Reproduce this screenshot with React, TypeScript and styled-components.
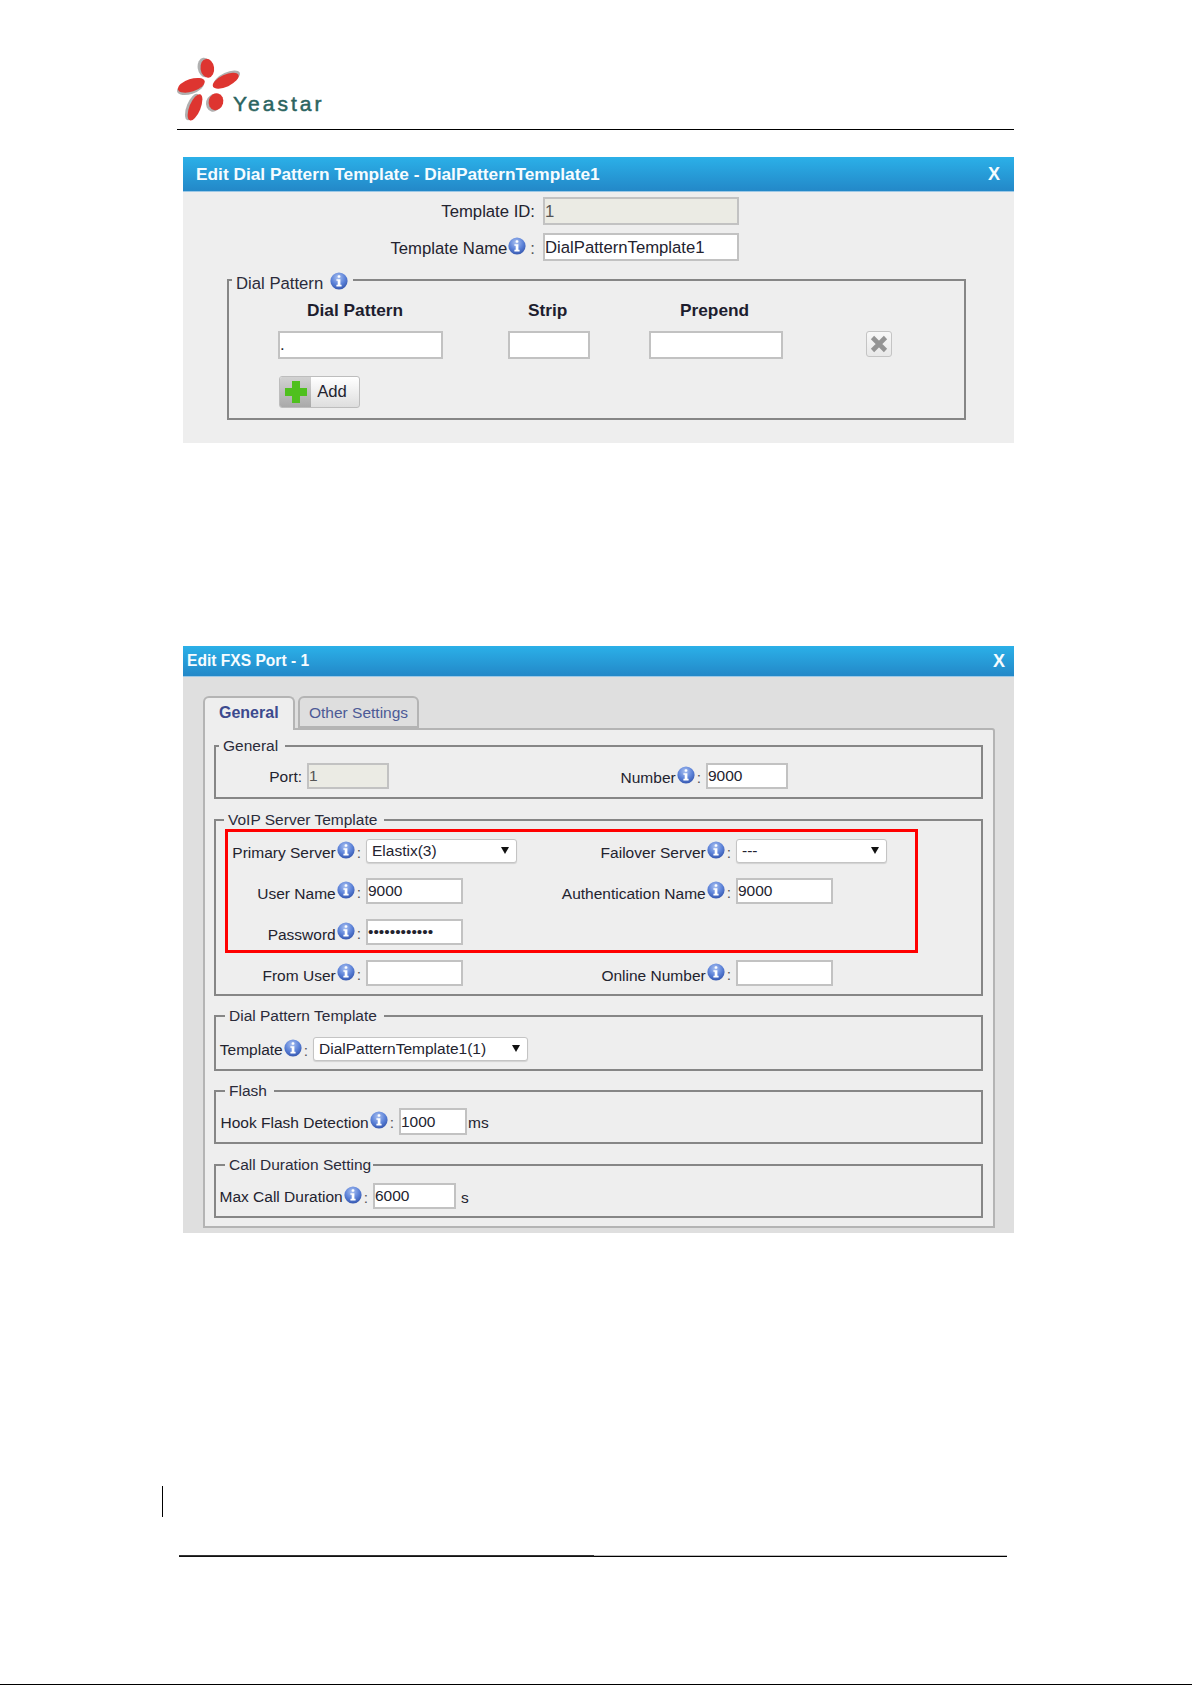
import { useId } from "react"
import styled, { createGlobalStyle } from "styled-components"

const GlobalStyle = createGlobalStyle`
html, body {
  margin: 0;
  background: #fff;
}
body {
  font-family: "Liberation Sans", Arial, sans-serif;
  font-size: 15.5px;
  color: #23232f;
}
`

const Page = styled.div`
width: 1192px;
height: 1685px;
display: flex;
flex-direction: column;
overflow: hidden;
`

const Header = styled.header`
margin: 57px 178px 0 177px;
height: 72px;
box-sizing: content-box;
border-bottom: 1px solid #000;
`

const Panel = styled.section<{ $top: number; $height: number; $bg: string; $font: number }>`
margin: ${(p) => p.$top}px 178px 0 183px;
height: ${(p) => p.$height}px;
background: ${(p) => p.$bg};
font-size: ${(p) => p.$font}px;
box-sizing: border-box;
`

const TitleBar = styled.div<{ $height: number; $pad: number; $padEnd: number; $font: number }>`
height: ${(p) => p.$height}px;
box-sizing: border-box;
padding: 0 ${(p) => p.$padEnd}px 0 ${(p) => p.$pad}px;
display: flex;
align-items: center;
justify-content: space-between;
background: linear-gradient(#2bb0e8, #2388c8);
border-bottom: 1px solid #9cc8e6;
color: #f6fcff;
font-weight: bold;
font-size: ${(p) => p.$font}px;
`

const TitleClose = styled.span`
font-size: 18px;
`

const TopRows = styled.div`
display: flex;
flex-direction: column;
gap: 8px;
padding-top: 5px;
`

const TopRow = styled.div`
display: flex;
height: 28px;
`

const Label = styled.div<{ $w: number; $pr?: number }>`
width: ${(p) => p.$w}px;
flex: none;
box-sizing: border-box;
padding-right: ${(p) => p.$pr ?? 5}px;
display: flex;
justify-content: flex-end;
align-items: center;
white-space: nowrap;
`

const LabelText = styled.span<{ $drop?: number }>`
margin-top: ${(p) => p.$drop ?? 3}px;
`

const Colon = styled.span<{ $ml?: number }>`
margin: 3px 0 0 ${(p) => p.$ml ?? 1}px;
color: #555;
`

const Info = styled.svg`
width: 18px;
height: 18px;
flex: none;
margin: -3px 1px 0 1px;
`

const Input = styled.input<{ $w: number; $h?: number }>`
width: ${(p) => p.$w}px;
height: ${(p) => p.$h ?? 26}px;
flex: none;
box-sizing: border-box;
border: 2px solid #c2c2c2;
padding: 0;
margin: 0;
background: #fff;
font: inherit;
color: #23232f;
outline: none;
&:disabled {
  background: #ebebe4;
  color: #555;
}
`

const TallInput = styled(Input)`
padding-top: 2px;
`

const Fieldset = styled.fieldset<{ $ml?: number; $mr?: number; $gap?: number }>`
margin: ${(p) => p.$gap ?? 11}px ${(p) => p.$mr ?? 0}px 0 ${(p) => p.$ml ?? 0}px;
padding: 0;
min-width: 0;
border: 2px solid #868686;
`

const Legend = styled.legend<{ $x: number; $pr?: number }>`
margin-left: ${(p) => p.$x - 4}px;
padding: 0 ${(p) => p.$pr ?? 7}px 0 4px;
height: 20px;
line-height: 20px;
display: flex;
align-items: center;
color: #2b2b3a;
`

const LegendText = styled.span`
margin-top: 8px;
`

const LegendInfo = styled(Info)`
margin: 2px 0 0 7px;
`

const PatternGrid = styled.div`
display: grid;
grid-template-columns: 230px 141px 217px 26px;
row-gap: 11px;
padding: 10px 0 0 49px;
`

const HeaderCell = styled.div<{ $indent: number }>`
padding-left: ${(p) => p.$indent}px;
height: 20px;
line-height: 20px;
font-size: 17.3px;
font-weight: bold;
color: #1d1d2e;
white-space: nowrap;
`

const AddButton = styled.button`
display: flex;
align-items: stretch;
width: 81px;
height: 32px;
margin: 17px 0 10px 50px;
padding: 0;
border: 1px solid #bdbdbd;
border-radius: 3px;
background: linear-gradient(#fff, #dedede);
font: inherit;
color: #23232f;
overflow: hidden;
`

const AddIcon = styled.span`
width: 31px;
display: flex;
align-items: center;
justify-content: center;
background: linear-gradient(#d2d2d2, #a9a9a9);
`

const AddLabel = styled.span`
flex: 1;
line-height: 30px;
text-align: center;
padding-right: 6px;
`

const DeleteButton = styled.button`
width: 26px;
height: 26px;
padding: 0;
border: 1px solid #c4c4c4;
border-radius: 3px;
background: linear-gradient(#f8f8f8, #e8e8e8);
display: flex;
align-items: center;
justify-content: center;
`

const TabArea = styled.div`
padding: 19px 19px 0 20px;
`

const TabBar = styled.div`
display: flex;
gap: 3px;
height: 32px;
`

const Tab = styled.div<{ $active?: boolean }>`
height: ${(p) => (p.$active ? 34 : 32)}px;
width: ${(p) => (p.$active ? 92 : 121)}px;
box-sizing: border-box;
position: relative;
z-index: 1;
border: 2px solid #b4b4b4;
border-bottom: ${(p) => (p.$active ? "none" : "2px solid #b4b4b4")};
border-radius: 6px 6px 0 0;
background: ${(p) => (p.$active ? "#eee" : "#dedede")};
color: ${(p) => (p.$active ? "#3c4a8e" : "#4c5a96")};
font-size: ${(p) => (p.$active ? 16 : 15.5)}px;
font-weight: ${(p) => (p.$active ? "bold" : "normal")};
padding-left: ${(p) => (p.$active ? 14 : 9)}px;
line-height: 29px;
white-space: nowrap;
`

const TabBody = styled.div`
height: 500px;
box-sizing: border-box;
border: 2px solid #b4b4b4;
border-radius: 0 3px 0 0;
background: #eee;
padding: 6px 10px 0 9px;
`

const FieldGrid = styled.div<{ $cols: string; $pt: number; $pb: number }>`
position: relative;
display: grid;
grid-template-columns: ${(p) => p.$cols};
align-items: center;
row-gap: 15px;
padding: 0;
margin: ${(p) => p.$pt}px 0 ${(p) => p.$pb}px;
`

const FieldCell = styled.div`
display: flex;
align-items: center;
`

const Unit = styled.span<{ $ml: number }>`
margin: 3px 0 0 ${(p) => p.$ml}px;
`

const RedMark = styled.div`
position: absolute;
left: 9px;
top: -10px;
width: 693px;
height: 124px;
box-sizing: border-box;
border: 3px solid #ff0000;
pointer-events: none;
`

const SelectBox = styled.div<{ $w: number; $h?: number }>`
position: relative;
width: ${(p) => p.$w}px;
height: ${(p) => p.$h ?? 24}px;
flex: none;
&::after {
  content: "";
  position: absolute;
  right: 8px;
  top: 8px;
  border-left: 4px solid transparent;
  border-right: 4px solid transparent;
  border-top: 7px solid #111;
}
`

const Select = styled.select`
appearance: none;
width: 100%;
height: 100%;
box-sizing: border-box;
border: 1px solid #c4c4c4;
border-radius: 3px;
background: #fff;
padding: 0 0 2px 5px;
margin: 0;
font: inherit;
color: #23232f;
outline: none;
box-shadow: 0 1px 1px rgba(0, 0, 0, 0.12);
`

const ChangeBar = styled.div`
margin: 253px 0 0 162px;
width: 1px;
height: 31px;
background: #000;
`

const FooterRule = styled.div`
margin: 38px 185px 0 179px;
height: 2px;
display: flex;
`

const RuleDark = styled.div`
width: 415px;
background: linear-gradient(#444, #000);
`

const RuleLight = styled.div`
flex: 1;
background: linear-gradient(#bbb 50%, #000 50%);
`

const PageEdge = styled.div`
margin-top: auto;
height: 1px;
background: #000;
`

function Logo() {
  return (
    <svg width="150" height="66" viewBox="0 0 150 66">
      <g fill="#b0b0b0">
        <ellipse cx="27.5" cy="10.5" rx="6.8" ry="9.8" transform="rotate(-8 27.5 10.5)" />
        <ellipse cx="50" cy="21.5" rx="14" ry="6" transform="rotate(-25 50 21.5)" />
        <ellipse cx="13.5" cy="30.5" rx="14" ry="6.5" transform="rotate(-18 13.5 30.5)" />
        <ellipse cx="15.5" cy="50" rx="14" ry="5.8" transform="rotate(-68 15.5 50)" />
        <ellipse cx="36.5" cy="46" rx="7.5" ry="8.7" transform="rotate(15 36.5 46)" />
      </g>
      <g fill="#de3530">
        <ellipse cx="30.3" cy="11.3" rx="6.8" ry="9.5" transform="rotate(-8 30.3 11.3)" />
        <ellipse cx="48.7" cy="23.7" rx="14" ry="6" transform="rotate(-25 48.7 23.7)" />
        <ellipse cx="14.3" cy="28.3" rx="14" ry="6.3" transform="rotate(-18 14.3 28.3)" />
        <ellipse cx="18" cy="50.3" rx="14" ry="5.6" transform="rotate(-68 18 50.3)" />
        <ellipse cx="39" cy="44.7" rx="7.3" ry="8.5" transform="rotate(15 39 44.7)" />
      </g>
      <text x="56" y="54" fontFamily="'Liberation Sans', Arial, sans-serif" fontSize="21" letterSpacing="3" stroke="#2b6460" strokeWidth="0.5" fill="#2b6460">
        Yeastar
      </text>
    </svg>
  )
}

function InfoIcon({ as: Comp = Info }: { as?: typeof Info }) {
  const id = useId()
  return (
    <Comp viewBox="0 0 18 18">
      <defs>
        <radialGradient id={id} cx="0.45" cy="0.3" r="0.75">
          <stop offset="0" stopColor="#a9c0f0" />
          <stop offset="0.55" stopColor="#5c82d8" />
          <stop offset="1" stopColor="#2f50a8" />
        </radialGradient>
      </defs>
      <circle cx="9" cy="9" r="8.6" fill={`url(#${id})`} />
      <rect x="7.6" y="3.2" width="2.8" height="2.6" rx="1" fill="#fff" />
      <path d="M6.4 7.2h4v5.6h1.2v1.6H6.4v-1.6h1.3V8.8H6.4z" fill="#fff" />
    </Comp>
  )
}

function Field({ w, text, pr, drop, colonGap }: { w: number; text: string; pr?: number; drop?: number; colonGap?: number }) {
  return (
    <Label $w={w} $pr={pr}>
      <LabelText $drop={drop}>{text}</LabelText>
      <InfoIcon />
      <Colon $ml={colonGap}>:</Colon>
    </Label>
  )
}

export default function App() {
  return (
    <Page>
      <GlobalStyle />
      <Header>
        <Logo />
      </Header>

      <Panel $top={27} $height={286} $bg="#eee" $font={16.7}>
        <TitleBar $height={35} $pad={13} $padEnd={14} $font={17.3}>
          <span>Edit Dial Pattern Template - DialPatternTemplate1</span>
          <TitleClose>X</TitleClose>
        </TitleBar>
        <TopRows>
          <TopRow>
            <Label $w={360} $pr={8}>
              <LabelText $drop={2}>Template ID:</LabelText>
            </Label>
            <TallInput $w={196} $h={28} disabled value="1" readOnly />
          </TopRow>
          <TopRow>
            <Field w={360} text="Template Name" pr={8} drop={4} colonGap={3} />
            <TallInput $w={196} $h={28} value="DialPatternTemplate1" readOnly />
          </TopRow>
        </TopRows>
        <Fieldset $ml={44} $mr={48} $gap={9}>
          <Legend $x={7} $pr={5}>
            <LegendText>Dial Pattern</LegendText>
            <InfoIcon as={LegendInfo} />
          </Legend>
          <PatternGrid>
            <HeaderCell $indent={29}>Dial Pattern</HeaderCell>
            <HeaderCell $indent={20}>Strip</HeaderCell>
            <HeaderCell $indent={31}>Prepend</HeaderCell>
            <div />
            <Input $w={165} $h={28} value="." readOnly />
            <Input $w={82} $h={28} value="" readOnly />
            <Input $w={134} $h={28} value="" readOnly />
            <DeleteButton aria-label="Delete">
              <svg width="22" height="22" viewBox="0 0 22 22">
                <path d="M4.5 4.5L17.5 17.5M17.5 4.5L4.5 17.5" stroke="#949494" strokeWidth="4.6" fill="none" />
              </svg>
            </DeleteButton>
          </PatternGrid>
          <AddButton>
            <AddIcon>
              <svg width="22" height="22" viewBox="0 0 22 22">
                <path d="M7 0h8v7h7v8h-7v7H7v-7H0V7h7z" fill="#4fc01e" />
              </svg>
            </AddIcon>
            <AddLabel>Add</AddLabel>
          </AddButton>
        </Fieldset>
      </Panel>

      <Panel $top={203} $height={587} $bg="#dfdfdf" $font={15.5}>
        <TitleBar $height={31} $pad={4} $padEnd={9} $font={15.6}>
          <span>Edit FXS Port - 1</span>
          <TitleClose>X</TitleClose>
        </TitleBar>
        <TabArea>
          <TabBar>
            <Tab $active>General</Tab>
            <Tab>Other Settings</Tab>
          </TabBar>
          <TabBody>
            <Fieldset $gap={0}>
              <Legend $x={7}>General</Legend>
              <FieldGrid $cols="91px 82px 317px 82px" $pt={7} $pb={8}>
                <Label $w={91}>
                  <LabelText $drop={2}>Port:</LabelText>
                </Label>
                <Input $w={82} disabled value="1" readOnly />
                <Field w={317} text="Number" drop={4} />
                <Input $w={82} value="9000" readOnly />
              </FieldGrid>
            </Fieldset>

            <Fieldset>
              <Legend $x={12}>VoIP Server Template</Legend>
              <FieldGrid $cols="150px 151px 219px 151px" $pt={9} $pb={8}>
                <Field w={150} text="Primary Server" drop={4} />
                <SelectBox $w={151}>
                  <Select defaultValue="Elastix(3)">
                    <option>Elastix(3)</option>
                  </Select>
                </SelectBox>
                <Field w={219} text="Failover Server" drop={4} />
                <SelectBox $w={151}>
                  <Select defaultValue="---">
                    <option>---</option>
                  </Select>
                </SelectBox>

                <Field w={150} text="User Name" drop={5} />
                <Input $w={97} value="9000" readOnly />
                <Field w={219} text="Authentication Name" drop={5} />
                <Input $w={97} value="9000" readOnly />

                <Field w={150} text="Password" drop={5} />
                <Input $w={97} type="password" value="123456789012" readOnly />
                <div />
                <div />

                <Field w={150} text="From User" drop={5} />
                <Input $w={97} value="" readOnly />
                <Field w={219} text="Online Number" drop={5} />
                <Input $w={97} value="" readOnly />
                <RedMark />
              </FieldGrid>
            </Fieldset>

            <Fieldset $gap={10}>
              <Legend $x={13}>Dial Pattern Template</Legend>
              <FieldGrid $cols="97px 215px" $pt={11} $pb={8}>
                <Field w={97} text="Template" drop={2} />
                <SelectBox $w={215}>
                  <Select defaultValue="DialPatternTemplate1(1)">
                    <option>DialPatternTemplate1(1)</option>
                  </Select>
                </SelectBox>
              </FieldGrid>
            </Fieldset>

            <Fieldset $gap={10}>
              <Legend $x={13}>Flash</Legend>
              <FieldGrid $cols="auto" $pt={7} $pb={7}>
                <FieldCell>
                  <Field w={183} text="Hook Flash Detection" drop={2} />
                  <Input $w={68} $h={27} value="1000" readOnly />
                  <Unit $ml={1}>ms</Unit>
                </FieldCell>
              </FieldGrid>
            </Fieldset>

            <Fieldset>
              <Legend $x={13} $pr={2}>Call Duration Setting</Legend>
              <FieldGrid $cols="auto" $pt={8} $pb={7}>
                <FieldCell>
                  <Field w={157} text="Max Call Duration" drop={1} />
                  <Input $w={83} value="6000" readOnly />
                  <Unit $ml={5}>s</Unit>
                </FieldCell>
              </FieldGrid>
            </Fieldset>
          </TabBody>
        </TabArea>
      </Panel>

      <ChangeBar />
      <FooterRule>
        <RuleDark />
        <RuleLight />
      </FooterRule>
      <PageEdge />
    </Page>
  )
}
